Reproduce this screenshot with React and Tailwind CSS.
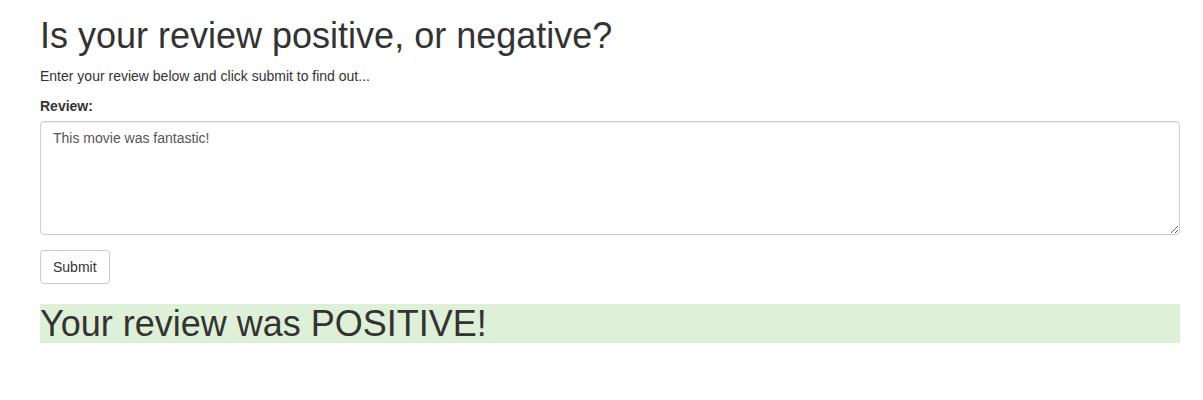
export default function App() {
  return (
    <div className="min-h-[400px] bg-white font-['Liberation_Sans',Arial,sans-serif] text-[14px] leading-[20px] text-[#333]">
      <div className="w-[1140px] ml-[40px] pt-[16px]">
        <h1 className="text-[36px] leading-[1.1] mb-[10px]">
          Is your review positive, or negative?
        </h1>
        <p className="mb-[10px]">Enter your review below and click submit to find out...</p>
        <form onSubmit={(e) => e.preventDefault()}>
          <div className="mb-[15px]">
            <label className="block font-bold mb-[5px]">Review:</label>
            <textarea
              rows={5}
              defaultValue="This movie was fantastic!"
              className="block w-full h-[114px] px-[12px] py-[6px] text-[14px] leading-[20px] text-[#555] bg-white border border-[#ccc] rounded-[4px] shadow-[inset_0_1px_1px_rgba(0,0,0,0.075)] outline-none resize-y"
            />
          </div>
          <button
            type="submit"
            className="h-[34px] px-[12px] py-[6px] text-[14px] leading-[20px] text-[#333] bg-white border border-[#ccc] rounded-[4px]"
          >
            Submit
          </button>
        </form>
        <h1 className="mt-[20px] text-[36px] leading-[1.1] bg-[#dff0d8]">
          Your review was POSITIVE!
        </h1>
      </div>
    </div>
  );
}
